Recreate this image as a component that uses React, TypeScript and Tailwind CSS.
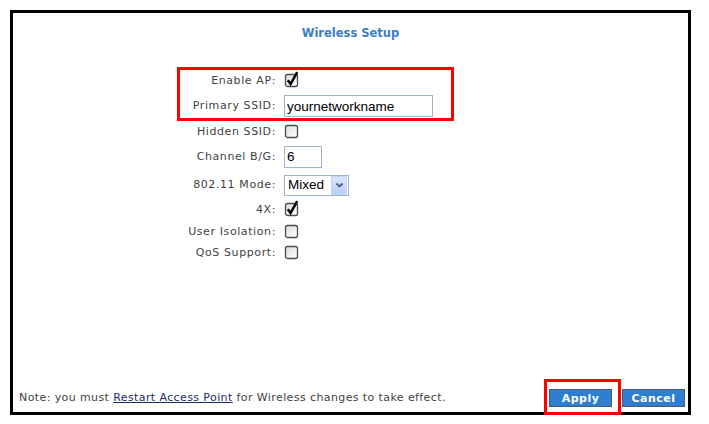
import React from 'react';

function CheckBox({ checked }: { checked?: boolean }) {
  return (
    <svg width="16" height="17" viewBox="0 0 16 17" className="block -mt-[3px]">
      <defs>
        <linearGradient id="cbg" x1="0" y1="0" x2="1" y2="1">
          <stop offset="0" stopColor="#dcdcd7" />
          <stop offset="1" stopColor="#ffffff" />
        </linearGradient>
      </defs>
      <rect x="1.5" y="3.5" width="12" height="12" rx="2" fill="url(#cbg)" stroke="#4b4b4b" strokeWidth="1.3" />
      {checked && (
        <path d="M3.8 9.2 L6.6 13 L13.2 1.2" fill="none" stroke="#000" strokeWidth="2.5" strokeLinejoin="miter" />
      )}
    </svg>
  );
}

function Row({ label, h, children }: { label: string; h: string; children: React.ReactNode }) {
  return (
    <div className={`flex items-center ${h}`}>
      <div className="w-[263px] text-right text-[11px] tracking-[0.6px] text-[#3f3f3f]">{label}:</div>
      <div className="ml-[8px] flex items-center">{children}</div>
    </div>
  );
}

export default function App() {
  return (
    <div className="w-[709px] h-[424px] bg-white pt-[10px] pl-[10px]" style={{ fontFamily: '"DejaVu Sans", Verdana, sans-serif' }}>
      <div className="relative flex flex-col w-[681px] h-[405px] border-[3px] border-black">
        <h1 className="pt-[12px] text-center text-[11.5px] font-bold text-[#3a7dc5]">Wireless Setup</h1>

        <div className="mt-[29px]">
          <Row label="Enable AP" h="h-[20px]">
            <CheckBox checked />
          </Row>
          <Row label="Primary SSID" h="h-[30px]">
            <input
              defaultValue="yournetworkname"
              className="w-[149px] h-[22px] border border-[#9fb3c9] px-[2px] text-[13.5px] text-black outline-none"
              style={{ fontFamily: '"Liberation Sans", Arial, sans-serif' }}
            />
          </Row>
          <Row label="Hidden SSID" h="h-[21px]">
            <CheckBox />
          </Row>
          <Row label="Channel B/G" h="h-[29px]">
            <input
              defaultValue="6"
              className="w-[38px] h-[22px] border border-[#9fb3c9] px-[2px] text-[13.5px] text-black outline-none"
              style={{ fontFamily: '"Liberation Sans", Arial, sans-serif' }}
            />
          </Row>
          <Row label="802.11 Mode" h="h-[28px]">
            <div
              className="flex items-center w-[65px] h-[21px] border border-[#9fb3c9] bg-white text-[13.5px] text-black"
              style={{ fontFamily: '"Liberation Sans", Arial, sans-serif' }}
            >
              <span className="flex-1 pl-[3px]">Mixed</span>
              <span className="flex items-center justify-center w-[16px] h-[19px] mr-[1px] bg-gradient-to-b from-[#dbe6fb] to-[#b7cdf5] border border-[#c4d4f2]">
                <svg width="9" height="7" viewBox="0 0 9 7">
                  <path d="M1.5 1.5 L4.5 4.5 L7.5 1.5" fill="none" stroke="#4d6185" strokeWidth="1.8" />
                </svg>
              </span>
            </div>
          </Row>
          <Row label="4X" h="h-[22px]">
            <CheckBox checked />
          </Row>
          <Row label="User Isolation" h="h-[22px]">
            <CheckBox />
          </Row>
          <Row label="QoS Support" h="h-[20px]">
            <CheckBox />
          </Row>
        </div>

        <div className="flex-1" />

        <div className="flex items-center pl-[6px] pr-[3px] pb-[5px]">
          <p className="flex-1 text-[11px] tracking-[0.4px] text-[#3f3f3f]">
            Note: you must{' '}
            <a href="#" className="underline text-[#1c2a6b]">Restart Access Point</a>{' '}
            for Wireless changes to take effect.
          </p>
          <button className="w-[63px] h-[18px] bg-[#2e7fd1] border border-[#505a66] text-white text-[11px] font-bold tracking-[0.5px] leading-none">
            Apply
          </button>
          <button className="ml-[10px] w-[63px] h-[18px] bg-[#2e7fd1] border border-[#505a66] text-white text-[11px] font-bold tracking-[0.5px] leading-none">
            Cancel
          </button>
        </div>

        {/* annotation boxes */}
        <div className="absolute left-[164px] top-[54px] w-[277px] h-[54px] border-[3px] border-[#ff0000] pointer-events-none" />
        <div className="absolute left-[531px] top-[366px] w-[77px] h-[36px] border-[3px] border-[#ff0000] pointer-events-none" />
      </div>
    </div>
  );
}
